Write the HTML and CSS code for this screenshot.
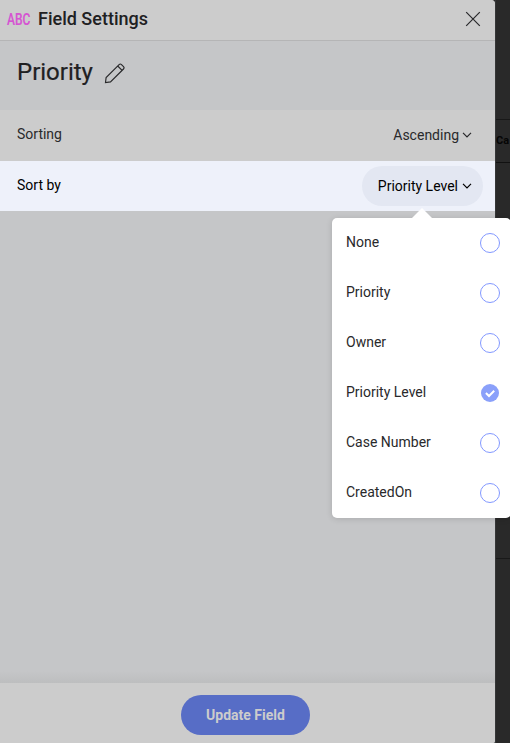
FILE: index.html
```html
<!DOCTYPE html>
<html lang="en">
<head>
<meta charset="utf-8">
<title>Field Settings</title>
<link rel="stylesheet" href="styles.css">
</head>
<body>
<div class="screen">
  <section class="panel">
    <header class="header">
      <span class="type">ABC</span>
      <h1>Field Settings</h1>
      <svg class="close" width="16" height="16" viewBox="0 0 16 16"><path d="M1.2 1.2 14.8 14.8M14.8 1.2 1.2 14.8"/></svg>
    </header>
    <div class="name">
      <h2>Priority</h2>
      <svg class="pencil" width="22" height="22" viewBox="0 0 22 22"><path d="M1.5 20.5 2.1 15.6 15.1 2.6Q16.3 1.4 17.5 2.6L19.5 4.6Q20.7 5.8 19.5 7L6.5 19.9ZM13.7 4 18.1 8.4"/></svg>
    </div>
    <div class="row">
      <span class="label">Sorting</span>
      <span class="value">Ascending <svg class="chevron" width="10" height="6" viewBox="0 0 10 6"><path d="M1 .8 5 4.8 9 .8"/></svg></span>
    </div>
    <div class="row active">
      <span class="label">Sort by</span>
      <span class="value pill">Priority Level <svg class="chevron" width="10" height="6" viewBox="0 0 10 6"><path d="M1 .8 5 4.8 9 .8"/></svg></span>
    </div>
    <div class="space"></div>
    <footer class="footer"><button class="update">Update Field</button></footer>
  </section>
  <aside class="backdrop">
    <div class="strip"></div>
    <div class="column">Ca</div>
    <div class="cells"></div>
    <div class="rest"></div>
  </aside>
  <ul class="menu">
    <li><span>None</span><i class="radio"></i></li>
    <li><span>Priority</span><i class="radio"></i></li>
    <li><span>Owner</span><i class="radio"></i></li>
    <li><span>Priority Level</span><i class="radio checked"><svg width="18" height="18" viewBox="0 0 18 18"><path d="M4.9 9 8 12 13.2 6.8"/></svg></i></li>
    <li><span>Case Number</span><i class="radio"></i></li>
    <li><span>CreatedOn</span><i class="radio"></i></li>
  </ul>
</div>
</body>
</html>
```
FILE: styles.css
```css
* { box-sizing: border-box; }
body { margin: 0; font: 14px/20px Roboto, sans-serif; color: #29292b; background: #292929; }
svg { fill: none; stroke: currentColor; flex: none; }
h1, h2 { margin: 0; }
.screen { position: relative; display: flex; width: 510px; height: 743px; overflow: hidden; }
.panel { display: flex; flex-direction: column; width: 495px; background: #c5c6c8; border-radius: 0 4px 2px 0; overflow: hidden; }
.header { display: flex; align-items: center; height: 41px; padding: 0 14px 2px 7px; background: #ccc; border-bottom: 1px solid #b5b5b6; }
.type { width: 31px; padding-top: 1px; font-size: 16px; font-weight: 500; color: #d653d2; transform: scaleX(.75); transform-origin: left; white-space: nowrap; -webkit-text-stroke: .2px #d653d2; }
.header h1 { font-size: 18px; font-weight: 500; color: #202022; }
.close { margin-left: auto; stroke-width: 1.2; }
.name { display: flex; align-items: center; height: 69px; padding: 0 17px 8px; }
.name h2 { font-size: 24px; line-height: 30px; font-weight: 400; color: #202022; -webkit-text-stroke: .2px #202022; }
.pencil { margin: 2px 0 0 11px; stroke-width: 1.15; }
.row { display: flex; align-items: center; justify-content: space-between; height: 51px; padding: 0 12px 1px 17px; background: #ccc; }
.label { padding-bottom: 2px; }
.value { display: flex; align-items: center; gap: 3px; padding-right: 11px; }
.row.active { height: 50px; color: #000; background: #eef1fa; }
.pill { height: 40px; gap: 4px; padding: 0 11px 0 16px; border-radius: 20px; background: #e3e7f2; }
.chevron { stroke-width: 1.2; }
.space { flex: 1; background: linear-gradient(to top, #bdbebf, #c5c6c8 12px); }
.footer { display: flex; justify-content: center; align-items: flex-start; height: 60px; padding: 12px 4px 0 0; background: #ccc; }
.update { width: 129px; height: 40px; padding: 0; border: 0; border-radius: 20px; background: #576dc6; color: #ccc; font: 700 14px/20px Roboto, sans-serif; }
.backdrop { display: flex; flex-direction: column; width: 15px; overflow: hidden; border-left: 1px solid #353637; }
.strip { height: 120px; border-bottom: 1px solid #181818; }
.column { height: 43px; padding: 11px 0 0; border-bottom: 1px solid #111; color: #050505; font-size: 11px; font-weight: 700; }
.cells { height: 396px; border-bottom: 1px solid #191919; }
.rest { flex: 1; }
.menu { position: absolute; left: 332px; top: 218px; width: 179px; height: 300px; margin: 0; padding: 0; border-radius: 5px; background: #fff; box-shadow: 0 1px 6px #0002; list-style: none; }
.menu::before { content: ""; position: absolute; left: 80px; top: -10px; border: 10px solid transparent; border-top: 0; border-bottom-color: #fff; }
.menu li { display: flex; align-items: center; justify-content: space-between; height: 50px; padding: 0 11px 0 14px; }
.menu span { padding-bottom: 2px; }
.radio { width: 20px; height: 20px; border: 1px solid #8298ff; border-radius: 50%; }
.checked { display: flex; width: 18px; height: 18px; margin-right: 1px; border: 0; background: #8aa0fa; color: #fff; }
.checked svg { stroke-width: 2; }
```
